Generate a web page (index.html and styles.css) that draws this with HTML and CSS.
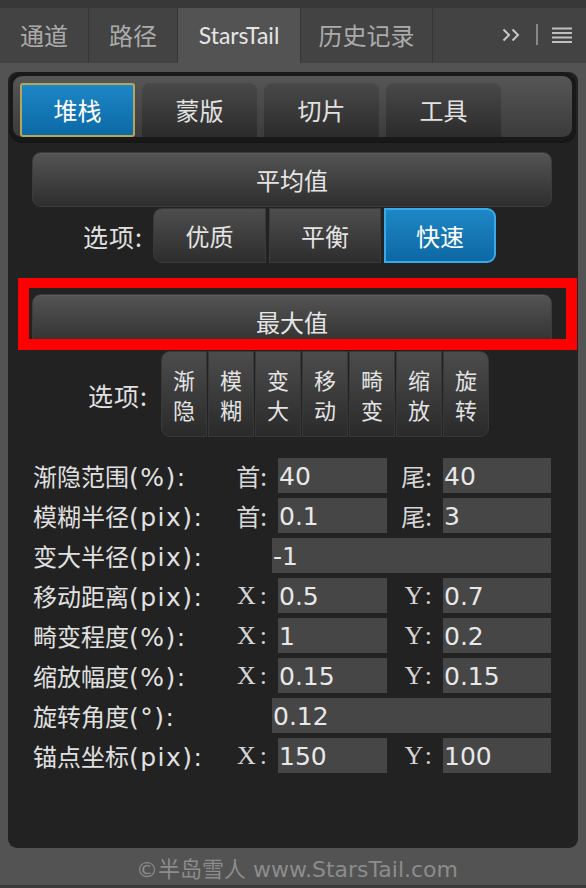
FILE: index.html
```html
<!DOCTYPE html>
<html lang="zh-CN">
<head>
<meta charset="utf-8">
<title>StarsTail</title>
<link rel="stylesheet" href="styles.css">
</head>
<body>
<div class="topbar"></div>
<div class="tabs">
  <div class="tab t1">通道</div>
  <div class="tab t2">路径</div>
  <div class="tab t3 active">StarsTail</div>
  <div class="tab t4">历史记录</div>
  <div class="tab-rest">
    <svg class="tab-icons" width="72" height="55" viewBox="0 0 72 55">
      <path d="M1.5 21.5 L7 27 L1.5 32.5 M10.5 21.5 L16 27 L10.5 32.5" fill="none" stroke="#c6c6c6" stroke-width="2"/>
      <path d="M35 16 V37" stroke="#9a9a9a" stroke-width="1.6"/>
      <path d="M50 20.5 H70 M50 25 H70 M50 29.5 H70 M50 34 H70" stroke="#c0c0c0" stroke-width="2"/>
    </svg>
  </div>
</div>
<div class="main">
  <div class="panel">
    <div class="subbar">
      <div class="sub active">堆栈</div>
      <div class="sub">蒙版</div>
      <div class="sub">切片</div>
      <div class="sub">工具</div>
    </div>

    <div class="bigbtn avg">平均值</div>

    <div class="optrow">
      <div class="optlabel">选项:</div>
      <div class="seg">
        <div class="segbtn first">优质</div>
        <div class="segbtn">平衡</div>
        <div class="segbtn last on">快速</div>
      </div>
    </div>

    <div class="maxwrap">
      <div class="bigbtn">最大值</div>
      <div class="redbox"></div>
    </div>

    <div class="optrow2">
      <div class="optlabel2">选项:</div>
      <div class="vgroup">
        <div class="vbtn first"><span>渐</span><span>隐</span></div>
        <div class="vbtn"><span>模</span><span>糊</span></div>
        <div class="vbtn"><span>变</span><span>大</span></div>
        <div class="vbtn"><span>移</span><span>动</span></div>
        <div class="vbtn"><span>畸</span><span>变</span></div>
        <div class="vbtn"><span>缩</span><span>放</span></div>
        <div class="vbtn last"><span>旋</span><span>转</span></div>
      </div>
    </div>

    <div class="form">
      <div class="row">
        <div class="lbl">渐隐范围<span class="lat">(%):</span></div>
        <div class="pre1">首:</div>
        <div class="inp in1">40</div>
        <div class="pre2">尾:</div>
        <div class="inp in2">40</div>
      </div>
      <div class="row">
        <div class="lbl">模糊半径<span class="lat">(pix):</span></div>
        <div class="pre1">首:</div>
        <div class="inp in1">0.1</div>
        <div class="pre2">尾:</div>
        <div class="inp in2">3</div>
      </div>
      <div class="row">
        <div class="lbl">变大半径<span class="lat">(pix):</span></div>
        <div class="inp full">-1</div>
      </div>
      <div class="row">
        <div class="lbl">移动距离<span class="lat">(pix):</span></div>
        <div class="pre1 xy">X:</div>
        <div class="inp in1">0.5</div>
        <div class="pre2 xy">Y:</div>
        <div class="inp in2">0.7</div>
      </div>
      <div class="row">
        <div class="lbl">畸变程度<span class="lat">(%):</span></div>
        <div class="pre1 xy">X:</div>
        <div class="inp in1">1</div>
        <div class="pre2 xy">Y:</div>
        <div class="inp in2">0.2</div>
      </div>
      <div class="row">
        <div class="lbl">缩放幅度<span class="lat">(%):</span></div>
        <div class="pre1 xy">X:</div>
        <div class="inp in1">0.15</div>
        <div class="pre2 xy">Y:</div>
        <div class="inp in2">0.15</div>
      </div>
      <div class="row">
        <div class="lbl">旋转角度<span class="lat">(°):</span></div>
        <div class="inp full">0.12</div>
      </div>
      <div class="row">
        <div class="lbl">锚点坐标<span class="lat">(pix):</span></div>
        <div class="pre1 xy">X:</div>
        <div class="inp in1">150</div>
        <div class="pre2 xy">Y:</div>
        <div class="inp in2">100</div>
      </div>
    </div>
  </div>
  <div class="footer">©半岛雪人 www.StarsTail.com</div>
</div>
</body>
</html>
```

FILE: styles.css
```css
* { box-sizing: border-box; }
html, body { margin: 0; padding: 0; }
body {
  width: 586px;
  height: 888px;
  overflow: hidden;
  background: #535353;
  font-family: "Noto Sans CJK SC", "DejaVu Sans", sans-serif;
  color: #e4e4e4;
}

.topbar { height: 8px; background: #383838; }

.tabs {
  display: flex;
  height: 55px;
  background: #434343;
}
.tab {
  display: flex;
  align-items: center;
  justify-content: center;
  height: 55px;
  border-right: 1px solid #363636;
  font-size: 24px;
  color: #ababab;
  padding-bottom: 2px;
}
.t1 { width: 89px; }
.t2 { width: 89px; }
.t3 { width: 123px; }
.t4 { width: 132px; }
.tab.active {
  background: #535353;
  color: #e6e6e6;
  font-family: "Lato", "Noto Sans CJK SC", sans-serif;
  font-size: 23px;
  border-right-color: #363636;
}
.tab-rest {
  flex: 1;
  display: flex;
  justify-content: flex-end;
}
.tab-icons { display: block; margin-right: 12px; }

.main {
  height: 825px;
  padding-top: 9px;
  border-bottom: 3px solid #3a3a3a;
}

.panel {
  margin: 0 8px;
  height: 776px;
  background: #222222;
  border-radius: 9px;
  padding-top: 4px;
  display: flex;
  flex-direction: column;
}

.subbar {
  margin: 0 6px 0 5px;
  height: 61px;
  border-radius: 9px;
  background: linear-gradient(#565656, #3b3b3b);
  box-shadow: 0 0 0 4px #191919, 0 2px 0 4px #161616;
  display: flex;
  align-items: flex-end;
  gap: 7px;
  padding-left: 7px;
}
.sub {
  width: 115px;
  height: 54px;
  border-radius: 8px 8px 0 0;
  background: linear-gradient(#494949, #2b2b2b);
  display: flex;
  align-items: center;
  justify-content: center;
  font-size: 24px;
  color: #e2e2e2;
  padding-bottom: 2px;
}
.sub.active {
  background: linear-gradient(#1e86c6, #0c69a6);
  border: 2px solid #b4a75c;
  border-radius: 3px;
  color: #ffffff;
}

.bigbtn {
  width: 520px;
  height: 55px;
  border-radius: 9px;
  background: linear-gradient(#545454, #2e2e2e);
  border: 1px solid #3c3c3c;
  box-shadow: inset 0 1px 0 #5c5c5c;
  display: flex;
  align-items: center;
  justify-content: center;
  font-size: 24px;
  color: #e6e6e6;
}
.avg { margin: 15px 0 0 24px; }

.optrow {
  display: flex;
  align-items: center;
  height: 55px;
  margin-top: 1px;
  padding-left: 72px;
  gap: 10px;
}
.optlabel {
  width: 63px;
  text-align: right;
  font-size: 25px;
  letter-spacing: 1px;
  color: #e0e0e0;
}
.seg { display: flex; gap: 3px; height: 55px; }
.segbtn {
  width: 112px;
  height: 55px;
  background: linear-gradient(#4e4e4e, #2d2d2d);
  border: 1px solid #3a3a3a;
  display: flex;
  align-items: center;
  justify-content: center;
  font-size: 24px;
  color: #e4e4e4;
}
.segbtn.first { width: 113px; border-radius: 9px 0 0 9px; }
.segbtn.last { border-radius: 0 9px 9px 0; }
.segbtn.on {
  background: linear-gradient(#1f87c6, #0c68a4);
  border: 2px solid #3aa9ea;
  color: #ffffff;
}

.maxwrap {
  position: relative;
  width: 520px;
  margin: 31px 0 0 24px;
}
.redbox {
  position: absolute;
  top: -16px;
  left: -14px;
  width: 559px;
  height: 72px;
  border: 11px solid #ff0000;
  border-top-width: 10px;
  z-index: 2;
}

.optrow2 {
  display: flex;
  align-items: center;
  height: 86px;
  margin-top: 2px;
  padding-left: 76px;
  gap: 13px;
}
.optlabel2 {
  width: 64px;
  text-align: right;
  font-size: 25px;
  letter-spacing: 1px;
  color: #e0e0e0;
  padding-top: 2px;
}
.vgroup { display: flex; gap: 1px; height: 86px; }
.vbtn {
  width: 46px;
  height: 86px;
  background: linear-gradient(#4c4c4c, #2a2a2a);
  border: 1px solid #383838;
  display: flex;
  flex-direction: column;
  align-items: center;
  justify-content: center;
  font-size: 22px;
  color: #e4e4e4;
}
.vbtn span {
  display: block;
  height: 30px;
  line-height: 30px;
}
.vbtn.first { border-radius: 9px 0 0 9px; }
.vbtn.last { border-radius: 0 9px 9px 0; }

.form {
  margin-top: 21px;
  padding-left: 25px;
  display: flex;
  flex-direction: column;
  gap: 5px;
}
.row {
  display: grid;
  grid-template-columns: 203px 36px 6px 109px 56px 108px;
  height: 35px;
  align-items: center;
}
.lbl {
  grid-column: 1 / 3;
  grid-row: 1;
  font-size: 24px;
  color: #e0e0e0;
  white-space: nowrap;
}
.lat {
  font-family: "DejaVu Sans", sans-serif;
  font-size: 25px;
  letter-spacing: 1.5px;
}
.pre1, .pre2 {
  font-size: 24px;
  color: #d6d6d6;
  text-align: right;
  padding-right: 11px;
  white-space: nowrap;
  grid-row: 1;
}
.pre1 { grid-column: 2 / 4; }
.pre2 { grid-column: 5 / 6; }
.xy {
  font-family: "Liberation Serif", "Noto Sans CJK SC", serif;
  font-size: 26px;
  letter-spacing: 4px;
  padding-right: 7px;
}
.inp {
  height: 35px;
  background: #464646;
  font-family: "DejaVu Sans", sans-serif;
  font-size: 25px;
  line-height: 35px;
  color: #e8e8e8;
  padding-left: 1px;
  padding-top: 1px;
  grid-row: 1;
}
.in1 { grid-column: 4 / 5; }
.in2 { grid-column: 6 / 7; }
.full { grid-column: 3 / 7; }

.footer {
  height: 37px;
  display: flex;
  align-items: center;
  justify-content: center;
  padding-left: 8px;
  font-family: "DejaVu Sans", "Noto Sans CJK SC", sans-serif;
  font-size: 22px;
  color: #8c8c8c;
}
```
